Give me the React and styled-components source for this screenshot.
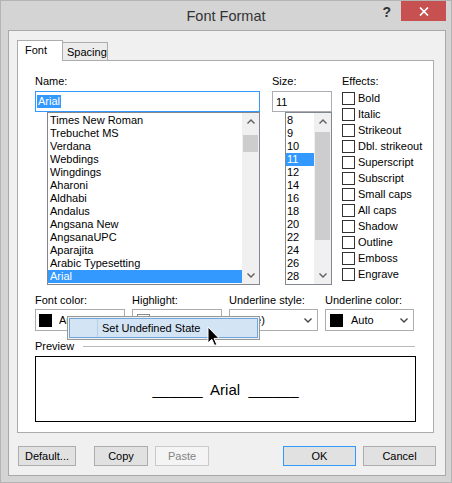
import React from 'react';
import styled, { createGlobalStyle } from 'styled-components';

const Global = createGlobalStyle`
  html, body { margin: 0; padding: 0; background: #d4d4d4; }
  body { font-family: "Liberation Sans", Arial, sans-serif; font-size: 11px; color: #000; }
  * { box-sizing: border-box; }
`;

const Window = styled.div`
  width: 452px;
  height: 483px;
  background: #d4d4d4;
  border: 1px solid #b4b4b4;
  display: flex;
  flex-direction: column;
  overflow: hidden;
`;

const TitleBar = styled.div`
  height: 29px;
  display: grid;
  grid-template-columns: 1fr auto 1fr;
  align-items: start;
`;

const Title = styled.div`
  grid-column: 2;
  align-self: center;
  font-size: 14.5px;
  color: #333;
  line-height: 17px;
  margin-top: 1px;
`;

const Controls = styled.div`
  grid-column: 3;
  justify-self: end;
  display: flex;
  align-items: flex-start;
  margin-right: 5px;
`;

const Help = styled.div`
  font-weight: bold;
  font-size: 14px;
  line-height: 20px;
  color: #333;
  margin-right: 10px;
  margin-top: 1px;
`;

const CloseBtn = styled.div`
  width: 45px;
  height: 20px;
  background: #c75050;
  display: flex;
  align-items: center;
  justify-content: center;
`;

const Client = styled.div`
  margin-left: 7px;
  width: 438px;
  height: 446px;
  border: 1px solid #a9a9a9;
  background: #f0f0f0;
  padding: 9px 9px 0 8px;
  display: flex;
  flex-direction: column;
`;

const TabRow = styled.div`
  display: flex;
  align-items: flex-start;
  height: 21px;
  margin-bottom: -1px;
  position: relative;
  z-index: 1;
`;

const Tab = styled.div`
  width: 46px;
  border: 1px solid #acacac;
  border-bottom: none;
  background: ${p => (p.$active ? '#fff' : '#ececec')};
  height: ${p => (p.$active ? '21px' : '18px')};
  margin-top: ${p => (p.$active ? '0' : '2px')};
  margin-left: ${p => (p.$active ? '0' : '-1px')};
  padding: 3px 0 0 ${p => (p.$active ? '7px' : '4px')};
  line-height: 13px;
  position: relative;
  z-index: ${p => (p.$active ? 2 : 1)};
`;

const Panel = styled.div`
  width: 417px;
  border: 1px solid #acacac;
  background: #fff;
  padding: 14px 17px 10px 17px;
  display: flex;
  flex-direction: column;
`;

const Top = styled.div`
  display: flex;
  align-items: flex-start;
`;

const Column = styled.div`
  display: flex;
  flex-direction: column;
  flex: none;
  width: ${p => p.$w}px;
  margin-right: ${p => p.$mr || 0}px;
`;

const Label = styled.div`
  height: 13px;
  line-height: 13px;
  white-space: nowrap;
`;

const TextBox = styled.div`
  margin-top: 3px;
  height: 21px;
  border: 1px solid ${p => (p.$focus ? '#3399ff' : '#abadb3')};
  background: #fff;
  display: flex;
  align-items: center;
  padding-left: ${p => (p.$focus ? '1px' : '3px')};
`;

const Selected = styled.span`
  background: #3399ff;
  color: #fff;
  line-height: 13px;
  padding: 0 1px;
`;

const List = styled.div`
  margin-left: ${p => p.$ml}px;
  height: 173px;
  border: 1px solid #828790;
  background: #fff;
  display: flex;
`;

const Items = styled.div`
  flex: 1;
  padding-top: 1px;
  overflow: hidden;
`;

const Item = styled.div`
  height: 13px;
  line-height: 13px;
  padding-left: ${p => p.$pl}px;
  white-space: nowrap;
  background: ${p => (p.$sel ? '#3399ff' : 'transparent')};
  color: ${p => (p.$sel ? '#fff' : '#000')};
`;

const Scroll = styled.div`
  width: 17px;
  flex: none;
  background: #f0f0f0;
  display: flex;
  flex-direction: column;
`;

const ArrowBtn = styled.div`
  height: 17px;
  display: flex;
  align-items: center;
  justify-content: center;
`;

const Track = styled.div`
  flex: 1;
  padding: 0 1px;
`;

const Thumb = styled.div`
  background: #cdcdcd;
`;

const Effects = styled.div`
  display: flex;
  flex-direction: column;
  flex: none;
`;

const EffectRow = styled.label`
  display: flex;
  align-items: center;
  height: 16px;
  white-space: nowrap;
`;

const Box = styled.span`
  width: 13px;
  height: 13px;
  border: 1px solid #333;
  background: #fff;
  margin-right: 3px;
  flex: none;
`;

const ComboRow = styled.div`
  margin-top: 9px;
  display: grid;
  grid-template-columns: 90px 90px 89px 89px;
  column-gap: 7px;
  position: relative;
`;

const ComboCol = styled.div`
  display: flex;
  flex-direction: column;
`;

const Combo = styled.div`
  margin-top: 2px;
  height: 22px;
  border: 1px solid #acacac;
  background: #fff;
  display: flex;
  align-items: center;
  padding: 0 5px 0 ${p => p.$pl || 3}px;
`;

const Swatch = styled.span`
  width: 13px;
  height: 13px;
  background: ${p => p.$c};
  border: 1px solid ${p => (p.$c === '#000' ? '#000' : '#8a8a8a')};
  margin-right: ${p => p.$mr || 7}px;
  flex: none;
`;

const ComboText = styled.span`
  flex: 1;
  white-space: nowrap;
  overflow: hidden;
`;

const Menu = styled.div`
  position: absolute;
  left: 32px;
  top: 22px;
  width: 193px;
  height: 24px;
  border: 1px solid #979797;
  background: #f0f0f0;
  padding: 1px;
  z-index: 3;
`;

const MenuItem = styled.div`
  height: 20px;
  border: 1px solid #70a6de;
  background: #d3e4f5;
  display: flex;
  align-items: stretch;
`;

const Gutter = styled.div`
  width: 28px;
  border-right: 1px solid #b7cde4;
`;

const MenuText = styled.div`
  padding-left: 4px;
  line-height: 18px;
  white-space: nowrap;
`;

const Cursor = styled.svg`
  position: absolute;
  left: 172px;
  top: 32px;
  z-index: 4;
`;

const PreviewHead = styled.div`
  margin-top: 9px;
  display: flex;
  align-items: center;
  height: 13px;
`;

const Rule = styled.div`
  flex: 1;
  margin-left: 9px;
  margin-right: 1px;
  height: 2px;
  border-top: 1px solid #b9b9b9;
  border-bottom: 1px solid #fff;
`;

const PreviewBox = styled.div`
  margin-top: 3px;
  height: 66px;
  border: 1px solid #000;
  background: #fff;
  display: flex;
  align-items: center;
  justify-content: center;
  font-size: 15px;
  white-space: pre;
`;

const ButtonRow = styled.div`
  margin-top: 13px;
  margin-left: 1px;
  display: flex;
  height: 20px;
`;

const Button = styled.div`
  width: ${p => p.$w}px;
  margin-left: ${p => p.$ml || 0}px;
  height: 20px;
  border: 1px solid ${p => (p.$default ? '#3399ff' : p.$disabled ? '#c9c9c9' : '#adadad')};
  background: ${p => (p.$disabled ? '#f4f4f4' : '#e1e1e1')};
  color: ${p => (p.$disabled ? '#838383' : '#000')};
  display: flex;
  align-items: center;
  justify-content: center;
  line-height: 13px;
`;

const Spacer = styled.div`
  flex: 1;
`;

const Chevron = ({ up, color = '#606060' }) => (
  <svg width="8" height="5" viewBox="0 0 8 5">
    <polyline
      points={up ? '0.5,4.5 4,1 7.5,4.5' : '0.5,0.5 4,4 7.5,0.5'}
      fill="none"
      stroke={color}
      strokeWidth="1.4"
    />
  </svg>
);

const ScrollBar = ({ offset, size }) => (
  <Scroll>
    <ArrowBtn><Chevron up /></ArrowBtn>
    <Track>
      <Thumb style={{ marginTop: offset, height: size }} />
    </Track>
    <ArrowBtn><Chevron /></ArrowBtn>
  </Scroll>
);

const fonts = [
  'Times New Roman', 'Trebuchet MS', 'Verdana', 'Webdings', 'Wingdings', 'Aharoni',
  'Aldhabi', 'Andalus', 'Angsana New', 'AngsanaUPC', 'Aparajita', 'Arabic Typesetting', 'Arial',
];
const sizes = ['8', '9', '10', '11', '12', '14', '16', '18', '20', '22', '24', '26', '28'];
const effects = [
  'Bold', 'Italic', 'Strikeout', 'Dbl. strikeout', 'Superscript', 'Subscript',
  'Small caps', 'All caps', 'Shadow', 'Outline', 'Emboss', 'Engrave',
];

export default function App() {
  return (
    <>
      <Global />
      <Window>
        <TitleBar>
          <Title>Font Format</Title>
          <Controls>
            <Help>?</Help>
            <CloseBtn>
              <svg width="10" height="9" viewBox="0 0 10 9">
                <path d="M1 0.5 L9 8.5 M9 0.5 L1 8.5" stroke="#fff" strokeWidth="1.7" />
              </svg>
            </CloseBtn>
          </Controls>
        </TitleBar>
        <Client>
          <TabRow>
            <Tab $active>Font</Tab>
            <Tab>Spacing</Tab>
          </TabRow>
          <Panel>
            <Top>
              <Column $w={225} $mr={12}>
                <Label>Name:</Label>
                <TextBox $focus><Selected>Arial</Selected></TextBox>
                <List $ml={12}>
                  <Items>
                    {fonts.map(f => (
                      <Item key={f} $pl={2} $sel={f === 'Arial'}>{f}</Item>
                    ))}
                  </Items>
                  <ScrollBar offset={5} size={17} />
                </List>
              </Column>
              <Column $w={60} $mr={10}>
                <Label>Size:</Label>
                <TextBox>11</TextBox>
                <List $ml={13}>
                  <Items>
                    {sizes.map(s => (
                      <Item key={s} $pl={1} $sel={s === '11'}>{s}</Item>
                    ))}
                  </Items>
                  <ScrollBar offset={2} size={108} />
                </List>
              </Column>
              <Effects>
                <Label style={{ marginBottom: 2 }}>Effects:</Label>
                {effects.map(e => (
                  <EffectRow key={e}><Box />{e}</EffectRow>
                ))}
              </Effects>
            </Top>

            <ComboRow>
              <ComboCol>
                <Label>Font color:</Label>
                <Combo><Swatch $c="#000" /><ComboText>Auto</ComboText><Chevron color="#444" /></Combo>
              </ComboCol>
              <ComboCol>
                <Label>Highlight:</Label>
                <Combo $pl={4}><Swatch $c="#fff" /><ComboText>(none)</ComboText><Chevron color="#444" /></Combo>
              </ComboCol>
              <ComboCol>
                <Label>Underline style:</Label>
                <Combo $pl={3}><ComboText>(none)</ComboText><Chevron color="#444" /></Combo>
              </ComboCol>
              <ComboCol>
                <Label>Underline color:</Label>
                <Combo $pl={4}><Swatch $c="#000" $mr={8} /><ComboText>Auto</ComboText><Chevron color="#444" /></Combo>
              </ComboCol>
              <Menu>
                <MenuItem>
                  <Gutter />
                  <MenuText>Set Undefined State</MenuText>
                </MenuItem>
              </Menu>
              <Cursor width="13" height="21" viewBox="0 0 13 21">
                <path
                  d="M1 1 L1 17 L4.8 13.3 L7.6 19.5 L9.8 18.5 L7.1 12.4 L12 12.4 Z"
                  fill="#000"
                  stroke="#fff"
                  strokeWidth="1"
                  strokeLinejoin="miter"
                />
              </Cursor>
            </ComboRow>

            <PreviewHead>
              <Label>Preview</Label>
              <Rule />
            </PreviewHead>
            <PreviewBox>{'______  Arial  ______'}</PreviewBox>
          </Panel>
          <ButtonRow>
            <Button $w={58}>Default...</Button>
            <Button $w={54} $ml={18}>Copy</Button>
            <Button $w={54} $ml={7} $disabled>Paste</Button>
            <Spacer />
            <Button $w={73} $default>OK</Button>
            <Button $w={73} $ml={7}>Cancel</Button>
          </ButtonRow>
        </Client>
      </Window>
    </>
  );
}
